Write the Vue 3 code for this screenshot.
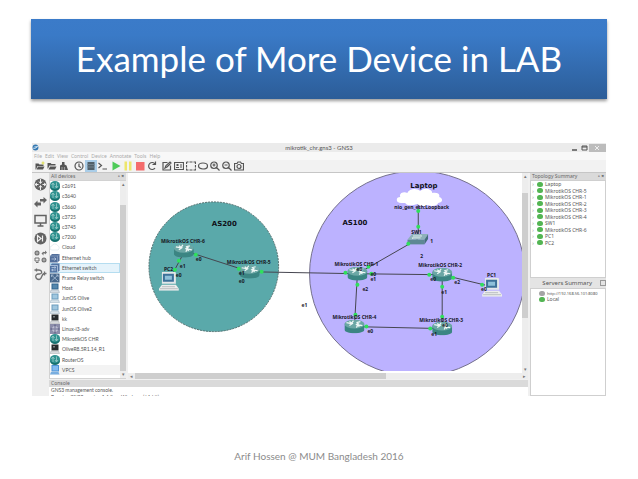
<template>
  <main class="slide">
    <svg class="sprite" aria-hidden="true">
      <symbol id="disc" viewBox="0 0 20 20">
        <ellipse cx="10" cy="12" rx="10" ry="8" fill="#16706f" />
        <ellipse cx="10" cy="8" rx="10" ry="8" fill="#2f9290" />
        <path d="M6 14V5M3 8l3-4 3 4M13 3v10M10 10l3 4 3-4" stroke="#a5d2cf" stroke-width="1.5" fill="none" />
      </symbol>
      <symbol id="cloud" viewBox="0 0 20 20">
        <path d="M4 16a4 4 0 0 1 0-8 6 6 0 0 1 11-1 5 5 0 0 1 1 9z" fill="#fff" stroke="#cfdde4" />
      </symbol>
      <symbol id="hub" viewBox="0 0 20 20">
        <path d="M4 2h15v13l-4 4H0V6z" fill="#536f9b" />
        <path d="M0 6h15v13M15 6l4-4" stroke="#a7bad5" fill="none" />
        <path d="M3 12h9M9 9l3 3-3 3" stroke="#c9d7ea" stroke-width="1.4" fill="none" />
      </symbol>
      <symbol id="switch" viewBox="0 0 20 20">
        <path d="M4 1h15v14l-4 4H0V5z" fill="#5475a4" />
        <path d="M0 5h15v14M3 9h8M9 7l3 2-3 2M12 14H4M6 12l-3 2 3 2" stroke="#c8d8ed" stroke-width="1.4" fill="none" />
      </symbol>
      <symbol id="relay" viewBox="0 0 20 20">
        <path d="M0 1h19v18H0z" fill="#48688c" />
        <path d="M3 4l13 12M16 4L3 16M3 8V4h4M12 4h4v4" stroke="#a9bfd7" stroke-width="1.6" fill="none" />
      </symbol>
      <symbol id="host" viewBox="0 0 20 20">
        <path d="M3 1h14v12H3z" fill="#2f648f" />
        <path d="M5 3h10v8H5z" fill="#5487ad" />
        <path d="M2 14h15l2 5H0z" fill="#d3dce4" stroke="#9aa8b5" />
      </symbol>
      <symbol id="olive" viewBox="0 0 20 20">
        <path d="M3 1h14v12H3z" fill="#6b9cbd" />
        <path d="M5 3h10v8H5z" fill="#a0c7df" />
        <path d="M2 14h15l2 5H0z" fill="#d8e3ea" stroke="#9bb1c0" />
      </symbol>
      <symbol id="dark" viewBox="0 0 20 20">
        <path d="M3 1h14v12H3z" fill="#252a2c" />
        <path d="M6 4h4v3H6z" fill="#787f82" />
        <path d="M2 14h15l2 5H0z" fill="#d8dadd" stroke="#a8acaf" />
      </symbol>
      <symbol id="linux" viewBox="0 0 20 20">
        <path d="M0 0h20v20H0z" fill="#8b8ca9" />
        <circle cx="10" cy="10" r="5" fill="none" stroke="#d7d8e8" stroke-width="2" />
        <path d="M10 1v5M10 14v5M1 10h5M14 10h5" stroke="#56587e" stroke-width="2" />
      </symbol>
      <symbol id="vpcs" viewBox="0 0 20 20">
        <path d="M3 0h15v13H3z" fill="#4d92d5" />
        <path d="M5 2h11v9H5z" fill="#82baf0" />
        <path d="M2 14h15l2 5H0z" fill="#78aee0" />
      </symbol>
      <symbol id="router-node" viewBox="0 0 20 14">
        <path d="M0 4v6c0 5 20 5 20 0V4z" fill="#3b8583" />
        <ellipse cx="10" cy="4.5" rx="10" ry="4.5" fill="#6ba7a5" />
        <path d="M2 3l5 1M5 2l3 2-3 2M18 6l-5-1M15 3l-3 2 3 2M9 1L7 4M12 8l2-4M16 2l-4 1" stroke="#eef7f5" stroke-width="1.2" fill="none" />
      </symbol>
      <symbol id="switch-node" viewBox="0 0 22 11">
        <path d="M0 6l5-6h17l-4 6z" fill="#8db1ba" />
        <path d="M0 6h18v5H0z" fill="#5d8894" />
        <path d="M18 6l4-6v5l-4 6z" fill="#456e7b" />
        <path d="M6 2h9l-1-1M14 4H5l1 1" stroke="#e4eff1" fill="none" />
      </symbol>
      <symbol id="pc-node" viewBox="0 0 20 19">
        <path d="M3 0h13l1 1v11H3z" fill="#e3e7e9" />
        <path d="M4 2h11v8H4z" fill="#3c7199" />
        <path d="M6 4h7v4H6z" fill="#8ec0d9" />
        <path d="M3 13h14l3 4v2H0v-2z" fill="#eceded" />
        <path d="M3 15h13M1 17h18" stroke="#b9bec0" />
      </symbol>
      <symbol id="cloud-node" viewBox="0 0 46 18">
        <path d="M5 15C-1 15-1 9 4 9 2 5 8 3 11 5 13 0 21 0 24 3c4-4 12-2 12 2 5-1 8 1 7 4 4 1 4 6-1 6-1 3-7 4-10 2-4 2-9 1-11-1-5 2-11 2-12-1z" fill="#fff" />
      </symbol>
    </svg>

    <h1 class="banner">Example of More Device in LAB</h1>

    <section class="window">
      <header class="titlebar">
        <svg class="logo" viewBox="0 0 12 12">
          <circle cx="6" cy="6" r="5" fill="#3478b2" />
          <path d="M2 7c3 2 6-1 8-4M4 5h5" stroke="#e4f1fa" stroke-width="1.6" fill="none" />
        </svg>
        <span class="title">mikrotik_chr.gns3 - GNS3</span>
        <div class="controls">
          <button aria-label="Minimize"><svg viewBox="0 0 10 8"><path d="M3 6h5" stroke="#555" stroke-width="1.5" /></svg></button>
          <button aria-label="Maximize"><svg viewBox="0 0 10 8"><path d="M3 2h5v4H3zM3 3h5" stroke="#555" fill="none" /></svg></button>
          <button class="close" aria-label="Close"><svg viewBox="0 0 10 8"><path d="M3 2l4 4M7 2L3 6" stroke="#eee" /></svg></button>
        </div>
      </header>

      <nav class="menu">
        <button v-for="item in menu" :key="item">{{ item }}</button>
      </nav>

      <div class="toolbar">
        <button v-for="tool in tools" :key="tool.name" :class="tool.name" :aria-label="tool.name">
          <svg viewBox="0 0 20 20">
            <path v-if="tool.fill" :d="tool.fill" :fill="tool.color || '#555'" />
            <path v-if="tool.line" :d="tool.line" :stroke="tool.stroke || '#555'" stroke-width="2.4" fill="none" />
          </svg>
        </button>
      </div>

      <div class="body">
        <aside class="rail">
          <button aria-label="Routers"><svg viewBox="0 0 26 26">
            <circle cx="13" cy="13" r="12" fill="#626262" />
            <path d="M13 2v8M10 7l3 4 3-4M13 24v-8M10 19l3-4 3 4M2 13h7M6 10l-4 3 4 3M24 13h-7M20 10l4 3-4 3" stroke="#efefef" stroke-width="2" fill="none" />
          </svg></button>
          <button aria-label="Switches"><svg viewBox="0 0 26 26">
            <path d="M12 6h7V2l7 6-7 7v-4h-7zM14 13H7V9l-7 7 7 7v-4h7z" fill="#626262" />
          </svg></button>
          <button aria-label="End devices"><svg viewBox="0 0 26 26">
            <path d="M2 3h22v15H2zM13 18v5M7 24h12" stroke="#626262" stroke-width="3" fill="none" />
          </svg></button>
          <button aria-label="Security devices"><svg viewBox="0 0 26 26">
            <circle cx="13" cy="13" r="12" fill="#626262" />
            <path d="M7 7l7 6-7 6zM17 7v12" stroke="#efefef" stroke-width="2.4" fill="none" />
          </svg></button>
          <button aria-label="All devices"><svg viewBox="0 0 26 26">
            <circle cx="6" cy="6" r="5" fill="#727272" />
            <circle cx="20" cy="20" r="5" fill="#727272" />
            <path d="M3 6h6M6 3v6M17 20h6M20 17v6" stroke="#efefef" />
            <path d="M19 4h3V1l4 4-4 4V7h-3v4l-4-4 4-4z" fill="#727272" />
            <path d="M2 16h8v6H2zM4 25h5" stroke="#727272" stroke-width="2" fill="none" />
          </svg></button>
          <button aria-label="Add a link"><svg viewBox="0 0 26 26">
            <path d="M1 4h8c8 0 8 8 2 8H9c-8 0-7 11 1 11 7 0 4-12 11-12h4M21 7v8M5 1v6" stroke="#707070" stroke-width="2.6" fill="none" />
          </svg></button>
        </aside>

        <div class="work">
          <div class="upper">
            <section class="dock devices">
              <h2 class="dock-title">All devices <span>▫ ×</span></h2>
              <div class="scroller">
                <ul class="device-list">
                  <li v-for="device in devices" :key="device.name" :class="{ hovered: device.hovered, current: device.current }">
                    <svg><use :href="'#' + device.icon" /></svg>{{ device.name }}
                  </li>
                </ul>
                <div class="scrollbar"><i>▴</i><b /><i>▾</i></div>
              </div>
            </section>

            <section class="canvas">
              <svg class="scene" viewBox="127 173 395 198" preserveAspectRatio="xMinYMin meet">
                <circle cx="213" cy="267" r="65" fill="#5aa9aa" stroke="#516d6d" stroke-dasharray="2 1" />
                <ellipse cx="417" cy="274" rx="108" ry="103" fill="#bcb2ff" stroke="#74708c" />
                <line v-for="(l, i) in links" :key="i" :x1="l[0]" :y1="l[1]" :x2="l[2]" :y2="l[3]" stroke="#45454f" />
                <use v-for="(n, i) in nodes" :key="i" :href="'#' + n.icon" :x="n.x" :y="n.y" :width="n.w" :height="n.h" />
                <circle v-for="(p, i) in ports" :key="i" :cx="p[0]" :cy="p[1]" r="2" fill="#2fe05c" />
                <text v-for="(t, i) in labels" :key="i" :x="t[0]" :y="t[1]" class="label">{{ t[2] }}</text>
                <text x="211" y="226" class="area">AS200</text>
                <text x="342" y="225" class="area">AS100</text>
                <text x="410" y="188" class="area">Laptop</text>
              </svg>
              <div class="scrollbar tall"><i>▴</i><b /><i>▾</i></div>
              <div class="scrollbar wide"><i>◂</i><b /><i>▸</i></div>
            </section>
          </div>

          <section class="console">
            <h2 class="dock-title">Console</h2>
            <p>GNS3 management console.<br>Running GNS3 version 1.4.0 on Windows (64-bit)</p>
          </section>
        </div>

        <aside class="side">
          <section class="dock topology">
            <h2 class="dock-title">Topology Summary <span>▫ ×</span></h2>
            <ul class="tree">
              <li v-for="name in topology" :key="name"><i>›</i><b class="led" />{{ name }}</li>
            </ul>
          </section>
          <section class="dock servers">
            <h2 class="servers-title">Servers Summary <span class="float" /></h2>
            <ul class="server-list">
              <li class="address"><b class="led off" />http://192.168.56.101:8080</li>
              <li><b class="led" />Local</li>
            </ul>
          </section>
        </aside>
      </div>
    </section>

    <footer class="footer">Arif Hossen @ MUM Bangladesh 2016</footer>
  </main>
</template>

<script setup>
const menu = ['File', 'Edit', 'View', 'Control', 'Device', 'Annotate', 'Tools', 'Help']

const tools = [
  { name: 'new', fill: 'M1 5h6l2 2h8v3H5l-3 7H1zM6 11h13l-3 6H3z', line: 'M13 4h6M16 1v6', stroke: '#dede54' },
  { name: 'open', fill: 'M1 4h6l2 2h8v3H5l-3 6H1zM6 11h13l-3 6H3z' },
  { name: 'save', fill: 'M2 18V9l4-2V2h5v5l4 2 3 9z', line: 'M6 18v-6M11 18v-6', stroke: '#999' },
  { name: 'snapshot', line: 'M10 2a8 8 0 1 1 0 16 8 8 0 0 1 0-16M10 5v6l4 2' },
  { name: 'interfaces', fill: 'M3 2h14v16H3z', color: '#52616a', line: 'M3 7h14M3 12h14', stroke: '#70818c' },
  { name: 'terminal', line: 'M1 4l6 5-6 5M9 16h9' },
  { name: 'start', fill: 'M3 1l16 9-16 9z', color: '#4ecb58' },
  { name: 'suspend', fill: 'M3 1h5v18H3zM12 1h5v18h-5z', color: '#ede66c' },
  { name: 'stop', fill: 'M2 2h17v17H2z', color: '#f46b6b' },
  { name: 'reload', line: 'M16 14a7 7 0 1 1 0-8M17 1v6h-6' },
  { name: 'note', line: 'M11 3H2v15h15V9M6 14l2-5 8-7 2 2-8 8z' },
  { name: 'image', fill: 'M5 6h4v4H5zM4 12h6v2H4zM12 7h4v2h-4zM12 11h4v2h-4z', line: 'M1 3h18v14H1z' },
  { name: 'rectangle', line: 'M1 2h4M7 2h6M15 2h4v4M19 8v5M19 15v3h-4M13 18H7M5 18H1v-3M1 13V8M1 6V2' },
  { name: 'ellipse', line: 'M10 4c12 0 12 12 0 12S-2 4 10 4' },
  { name: 'zoom-in', line: 'M8 2a6 6 0 1 1 0 13A6 6 0 0 1 8 2M13 13l6 6M5 8h6M8 5v6' },
  { name: 'zoom-out', line: 'M8 2a6 6 0 1 1 0 13A6 6 0 0 1 8 2M13 13l6 6M5 8h6' },
  { name: 'screenshot', line: 'M1 5h5l2-3h5l2 3h4v13H1zM10 7a4 4 0 1 1 0 8 4 4 0 0 1 0-8' }
]

const devices = [
  { name: 'c2691', icon: 'disc' },
  { name: 'c3640', icon: 'disc' },
  { name: 'c3660', icon: 'disc' },
  { name: 'c3725', icon: 'disc' },
  { name: 'c3745', icon: 'disc' },
  { name: 'c7200', icon: 'disc' },
  { name: 'Cloud', icon: 'cloud' },
  { name: 'Ethernet hub', icon: 'hub' },
  { name: 'Ethernet switch', icon: 'switch', hovered: true },
  { name: 'Frame Relay switch', icon: 'relay' },
  { name: 'Host', icon: 'host' },
  { name: 'JunOS Olive', icon: 'olive' },
  { name: 'JunOS Olive2', icon: 'olive' },
  { name: 'kk', icon: 'dark' },
  { name: 'Linux-i3-adv', icon: 'linux' },
  { name: 'MikrotikOS CHR', icon: 'disc' },
  { name: 'OliveR8.5R1.14_R1', icon: 'dark' },
  { name: 'RouterOS', icon: 'disc' },
  { name: 'VPCS', icon: 'vpcs', current: true }
]

const topology = [
  'Laptop', 'MikrotikOS CHR-5', 'MikrotikOS CHR-1', 'MikrotikOS CHR-2', 'MikrotikOS CHR-3',
  'MikrotikOS CHR-4', 'SW1', 'MikrotikOS CHR-6', 'PC1', 'PC2'
]

// scene coordinates: x1, y1, x2, y2
const links = [
  [184, 251, 249, 272],
  [184, 251, 168, 281],
  [249, 272, 357, 274],
  [357, 274, 442, 275],
  [357, 274, 418, 239],
  [418, 198, 418, 239],
  [357, 274, 354, 327],
  [442, 275, 442, 329],
  [354, 327, 442, 329],
  [442, 275, 492, 287]
]

const nodes = [
  { icon: 'router-node', x: 173, y: 244, w: 20, h: 14 },
  { icon: 'router-node', x: 239, y: 265, w: 20, h: 14 },
  { icon: 'router-node', x: 347, y: 267, w: 20, h: 14 },
  { icon: 'router-node', x: 432, y: 268, w: 20, h: 14 },
  { icon: 'router-node', x: 344, y: 320, w: 20, h: 14 },
  { icon: 'router-node', x: 432, y: 322, w: 20, h: 14 },
  { icon: 'switch-node', x: 407, y: 234, w: 21, h: 11 },
  { icon: 'cloud-node', x: 396, y: 188, w: 46, h: 18 },
  { icon: 'pc-node', x: 158, y: 272, w: 20, h: 19 },
  { icon: 'pc-node', x: 482, y: 278, w: 20, h: 19 }
]

const ports = [
  [195, 255], [238, 269], [178, 261], [174, 270], [261, 272], [345, 273], [371, 274], [429, 275],
  [368, 267], [408, 244], [418, 211], [418, 227], [357, 285], [355, 315], [366, 327], [430, 329],
  [442, 287], [442, 317], [453, 278], [482, 285]
]

const labels = [
  [160, 243, 'MikrotikOS CHR-6'],
  [226, 264, 'MikrotikOS CHR-5'],
  [334, 266, 'MikrotikOS CHR-1'],
  [418, 267, 'MikrotikOS CHR-2'],
  [419, 322, 'MikrotikOS CHR-3'],
  [332, 319, 'MikrotikOS CHR-4'],
  [394, 209, 'nio_gen_eth:Loopback'],
  [411, 234, 'SW1'],
  [163, 271, 'PC2'],
  [487, 277, 'PC1'],
  [195, 261, 'e0'],
  [179, 268, 'e1'],
  [175, 277, 'e0'],
  [238, 275, 'e1'],
  [238, 283, 'e0'],
  [301, 307, 'e1'],
  [430, 243, '1'],
  [420, 258, '2'],
  [356, 271, 'e0'],
  [370, 276, 'e0'],
  [370, 281, 'e1'],
  [362, 291, 'e2'],
  [430, 281, 'e0'],
  [454, 284, 'e2'],
  [441, 294, 'e1'],
  [481, 291, 'e0'],
  [367, 333, 'e0'],
  [431, 336, 'e1'],
  [442, 327, 'e0']
]
</script>

<style>
body {
  margin: 0;
  background: #fff;
}
</style>

<style scoped>
.slide {
  padding: 19px 31px;
  font-family: "Noto Sans", "Open Sans", sans-serif;
  font-size: 5px;
  color: #555;
}

.sprite {
  display: none;
}

.banner {
  margin: 0;
  padding: 15px 0 17px;
  line-height: 48px;
  text-align: center;
  font-family: Lato, sans-serif;
  font-size: 35px;
  font-weight: 400;
  color: #fff;
  background: linear-gradient(#3b7bc9 0%, #3a7ac7 20%, #2c5d98 100%);
  box-shadow: 0 2px 3px rgba(0, 0, 0, 0.4);
}

.window {
  margin: 44px 1px 0;
  background: #f0f0f0;
}

button {
  display: block;
  margin: 0;
  padding: 0;
  border: 0;
  background: none;
  font: inherit;
  color: inherit;
}

svg {
  display: block;
}

ul {
  margin: 0;
  padding: 0;
  list-style: none;
}

i {
  font-style: normal;
}

.titlebar {
  display: flex;
  align-items: center;
  height: 9px;
  background: #ebebeb;
}

.logo {
  width: 7px;
  height: 7px;
}

.title {
  flex: 1;
  text-align: center;
  padding-left: 30px;
  font-family: Lato, sans-serif;
  font-size: 6px;
}

.controls {
  display: flex;
}

.controls svg {
  width: 10px;
  height: 8px;
}

.controls .close {
  width: 17px;
  padding-left: 3px;
  background: #bcbcbc;
}

.menu {
  display: flex;
  gap: 3px;
  height: 8px;
  padding-left: 2px;
  line-height: 8px;
  background: #f8f8f8;
  color: #aaa;
}

.toolbar {
  display: flex;
  gap: 2px;
  align-items: center;
  height: 12px;
  padding-left: 3px;
  background: #f2f2f2;
  border-bottom: 1px solid #c6c6c6;
}

.toolbar svg {
  width: 10px;
  height: 10px;
}

.toolbar .snapshot {
  margin-left: 3px;
}

.toolbar .interfaces {
  background: #a9cde8;
  outline: 1px solid #a9cde8;
}

.toolbar .start {
  margin-left: 1px;
}

.toolbar .note {
  margin-left: 3px;
}

.body {
  display: flex;
  height: 223px;
}

.rail {
  display: flex;
  flex-direction: column;
  gap: 5px;
  width: 17px;
  padding-top: 5px;
}

.rail button {
  padding-left: 2px;
}

.rail svg {
  width: 13px;
  height: 13px;
}

.work {
  flex: 1;
  min-width: 0;
  display: flex;
  flex-direction: column;
}

.upper {
  flex: 1;
  min-height: 0;
  display: flex;
  gap: 2px;
}

.dock-title {
  display: flex;
  justify-content: space-between;
  margin: 0;
  padding: 0 2px;
  font-size: 5px;
  font-weight: 400;
  line-height: 7px;
  color: #666;
  background: #dadada;
}

.dock-title span {
  color: #222;
}

.devices {
  width: 77px;
  display: flex;
  flex-direction: column;
}

.scroller {
  flex: 1;
  min-height: 0;
  display: flex;
  border: 1px solid #d2d2d2;
  border-right: 0;
  background: #fff;
}

.device-list {
  flex: 1;
  min-width: 0;
  display: grid;
  grid-auto-rows: 1fr;
  height: 194px;
  font-family: Lato, sans-serif;
}

.device-list li {
  display: flex;
  align-items: center;
  gap: 2px;
  white-space: nowrap;
}

.device-list svg {
  width: 10px;
  height: 10px;
}

.device-list .hovered {
  background: #e5f3fb;
  box-shadow: inset 0 0 0 1px #b5ddf0;
}

.device-list .current {
  background: #f3f3f3;
}

.scrollbar {
  display: flex;
  flex-direction: column;
  width: 6px;
  background: #ededed;
  text-align: center;
  line-height: 7px;
  color: #777;
}

.scrollbar b {
  flex: 1;
  margin-top: 17px;
  background: #cecece;
}

.canvas {
  flex: 1;
  min-width: 0;
  display: grid;
  grid-template-columns: 1fr 6px;
  grid-template-rows: 1fr 6px;
  background: #fff;
}

.scene {
  width: 100%;
  height: 198px;
  font-family: "Noto Sans", sans-serif;
}

.label {
  font-size: 5px;
  font-weight: 700;
  fill: #17171f;
}

.area {
  font-family: "DejaVu Sans", sans-serif;
  font-size: 7px;
  font-weight: 700;
  fill: #101018;
}

.tall b {
  margin: 13px 0 48px;
}

.wide {
  grid-column: 1 / -1;
  flex-direction: row;
  width: auto;
  line-height: 6px;
}

.wide i {
  width: 7px;
}

.wide b {
  margin: 0 135px 0 0;
}

.console .dock-title {
  margin-top: 1px;
}

.console p {
  height: 9px;
  margin: 0;
  padding-left: 2px;
  overflow: hidden;
  font-family: Lato, sans-serif;
  line-height: 7px;
  background: #fff;
}

.side {
  display: flex;
  flex-direction: column;
  width: 76px;
  padding-left: 2px;
}

.topology {
  height: 105px;
  display: flex;
  flex-direction: column;
}

.tree {
  flex: 1;
  display: grid;
  grid-auto-rows: 1fr;
  padding-bottom: 31px;
  border: 1px solid #cfcfcf;
  background: #fff;
}

.tree li,
.server-list li {
  display: flex;
  align-items: center;
  gap: 2px;
  white-space: nowrap;
}

.tree i {
  width: 4px;
  text-align: center;
  color: #888;
}

.led {
  flex: none;
  width: 6px;
  height: 5px;
  border-radius: 3px;
  background: #53b553;
}

.led.off {
  background: #a5a5a5;
}

.servers {
  flex: 1;
  display: flex;
  flex-direction: column;
}

.servers-title {
  display: flex;
  justify-content: flex-end;
  align-items: center;
  gap: 8px;
  margin: 0;
  font-size: 6px;
  font-weight: 400;
  line-height: 10px;
  background: #e4e4e4;
}

.float {
  width: 4px;
  height: 4px;
  border: 1px solid #999;
}

.server-list {
  flex: 1;
  padding: 1px 0 0 8px;
  border: 1px solid #cfcfcf;
  background: #fff;
}

.server-list li {
  height: 6px;
}

.server-list .address {
  font-size: 4px;
}

.footer {
  margin-top: 52px;
  text-align: center;
  font-family: Lato, sans-serif;
  font-size: 10px;
  line-height: 16px;
  color: #8b8b8b;
}
</style>
